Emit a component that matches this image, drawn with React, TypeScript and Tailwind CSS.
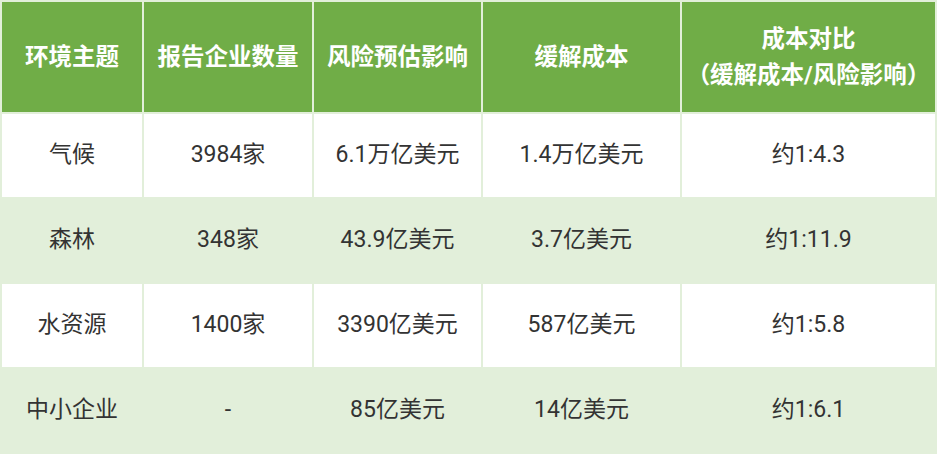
const headers = ["环境主题", "报告企业数量", "风险预估影响", "缓解成本"];

const rows = [
  ["气候", "3984家", "6.1万亿美元", "1.4万亿美元", "约1:4.3"],
  ["森林", "348家", "43.9亿美元", "3.7亿美元", "约1:11.9"],
  ["水资源", "1400家", "3390亿美元", "587亿美元", "约1:5.8"],
  ["中小企业", "-", "85亿美元", "14亿美元", "约1:6.1"],
];

export default function App() {
  return (
    <div className="w-[948px] h-[456px] bg-white" style={{ fontFamily: 'Roboto, "Noto Sans CJK SC", sans-serif' }}>
      {/* 表格外框 */}
      <div className="w-[937px] bg-[#e2efda] p-[2px] grid grid-cols-[140px_168px_167px_197px_253px] grid-rows-[110px_83px_83px_83px_83px] gap-[2px]">
        {headers.map((h) => (
          <div key={h} className="bg-[#70ad47] flex items-center justify-center text-white font-bold text-[23.5px] leading-[36px]">
            {h}
          </div>
        ))}
        <div className="bg-[#70ad47] flex flex-col items-center justify-center text-white font-bold text-[23.5px] leading-[36px] text-center">
          <span>成本对比</span>
          <span>（缓解成本/风险影响）</span>
        </div>

        {rows.map((r, i) =>
          r.map((c, j) => (
            <div
              key={`${i}-${j}`}
              className={`flex items-center justify-center text-[23px] text-[#333333] ${i % 2 === 0 ? "bg-white" : "bg-[#e2efda]"}`}
            >
              {c}
            </div>
          ))
        )}
      </div>
    </div>
  );
}
